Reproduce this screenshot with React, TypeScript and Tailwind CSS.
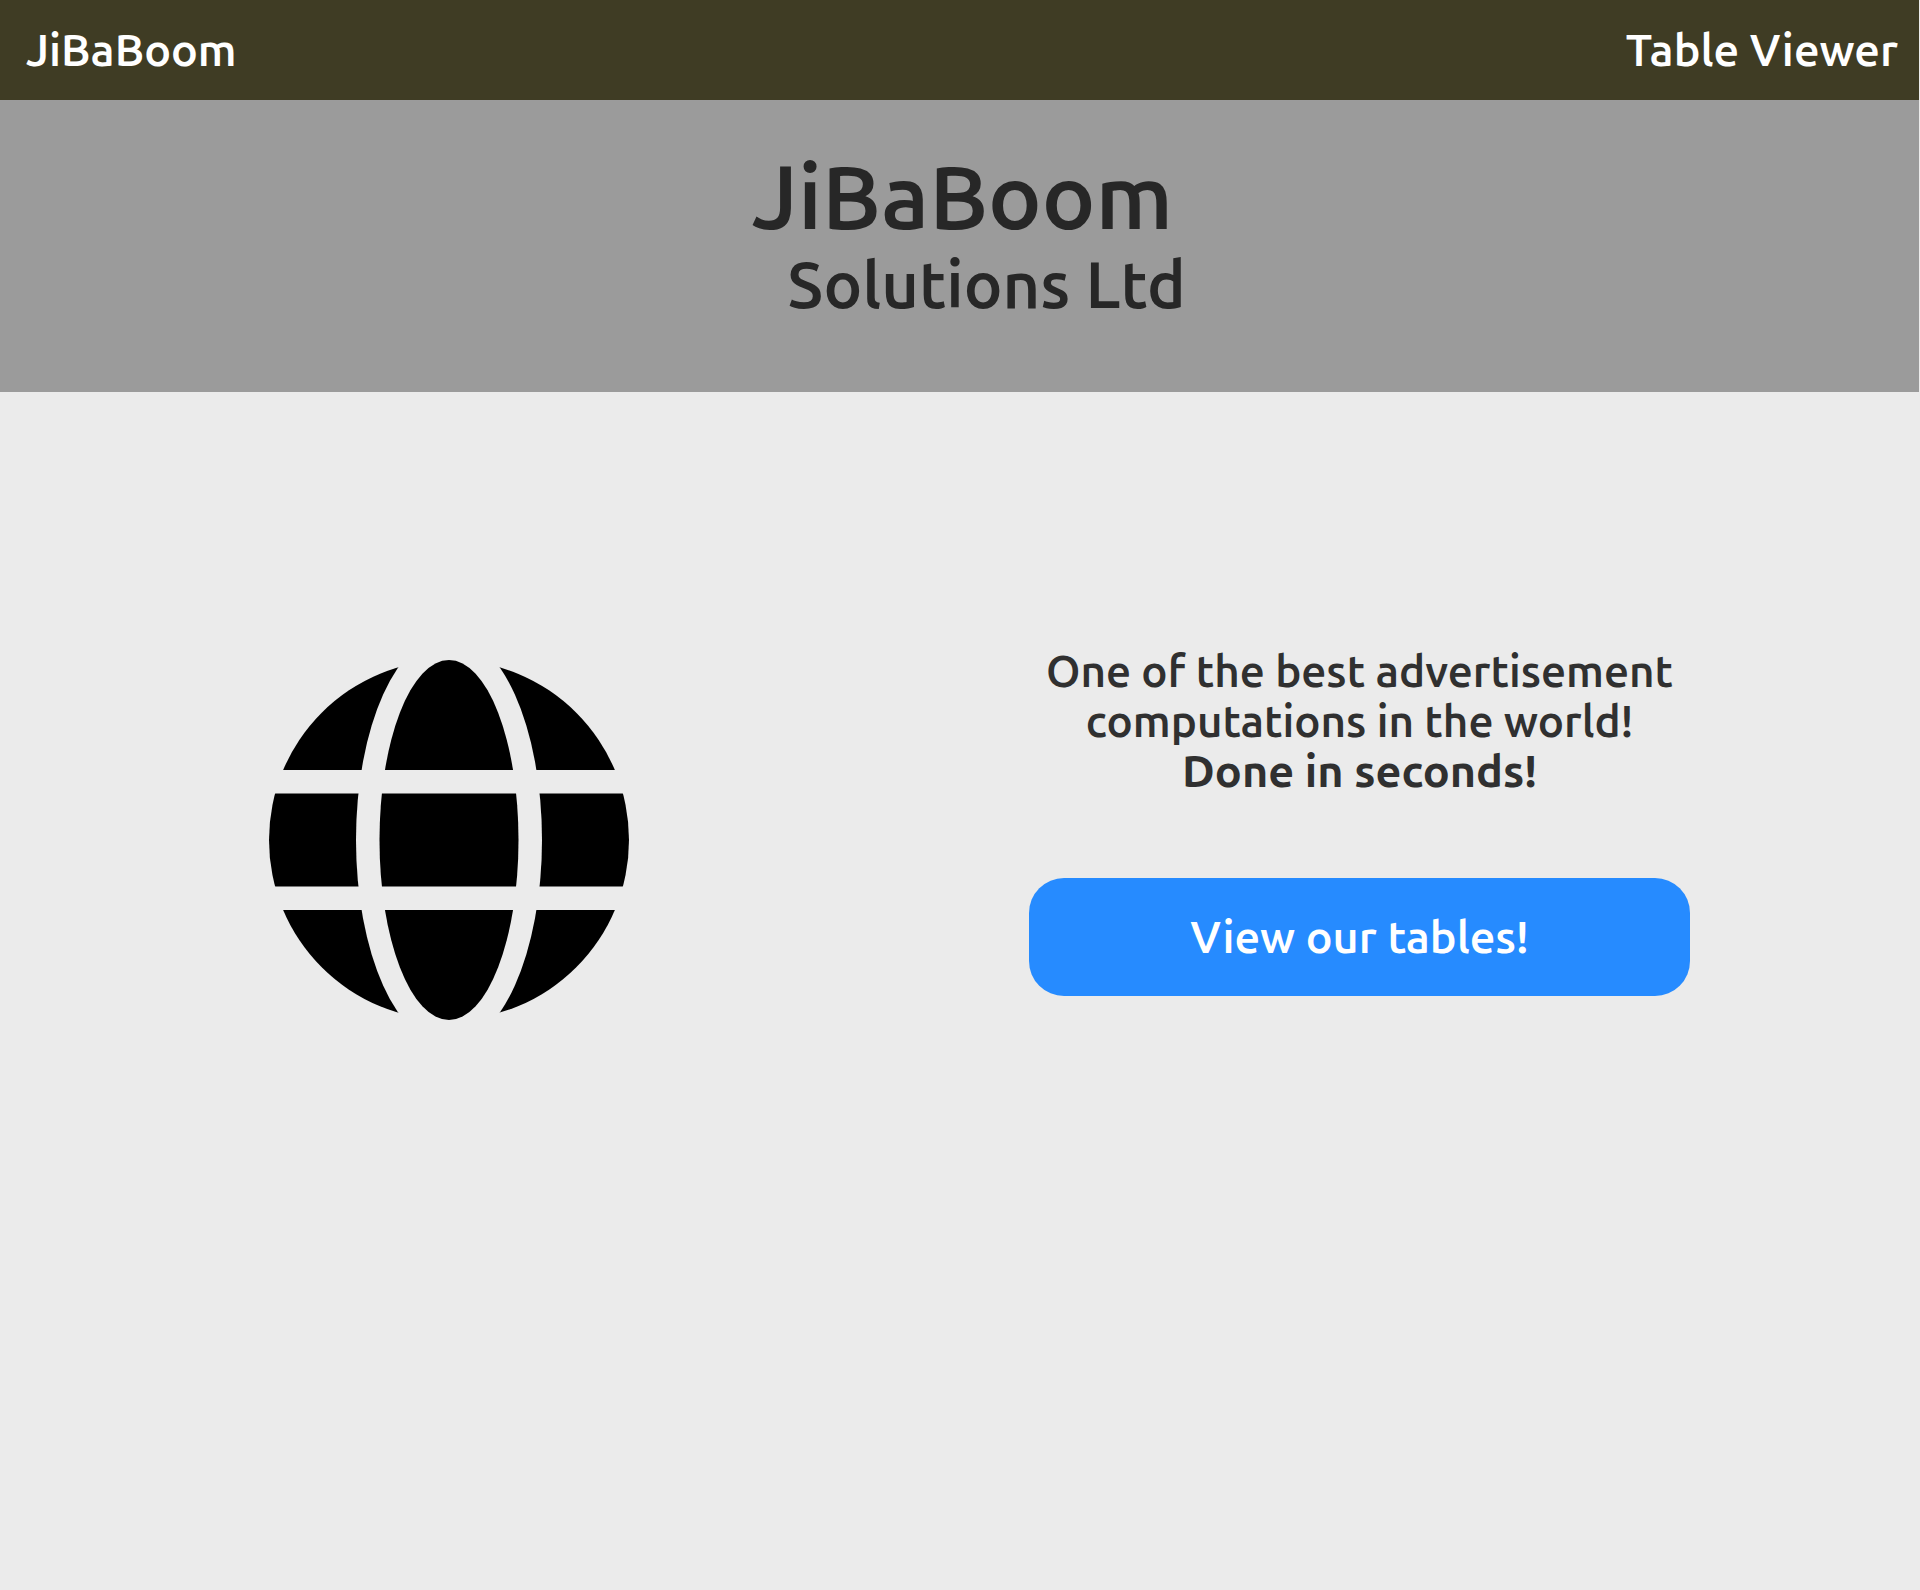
function Globe() {
  return (
    <svg viewBox="0 0 360 360" className="h-[360px] w-[360px]" role="img" aria-label="Globe">
      <defs>
        <mask id="latitudes">
          <rect width="360" height="360" fill="white" />
          <rect y="110" width="360" height="23.5" fill="black" />
          <rect y="226.5" width="360" height="23.5" fill="black" />
        </mask>
        <mask id="meridians">
          <rect width="360" height="360" fill="white" />
          <ellipse cx="180" cy="180" rx="93" ry="206" fill="black" />
        </mask>
      </defs>
      <g mask="url(#latitudes)">
        <circle cx="180" cy="180" r="180" mask="url(#meridians)" />
        <ellipse cx="180" cy="180" rx="69.5" ry="180" />
      </g>
    </svg>
  );
}

export default function App() {
  return (
    <div className="min-h-screen bg-[#ebebeb] font-['Ubuntu_Sans','Ubuntu','Noto_Sans',sans-serif] font-semibold">
      <header className="mr-px flex h-[100px] items-center justify-between bg-[#3f3c24] pt-1 pr-[21px] pl-[26px] text-[45px] text-white">
        <a href="#home">JiBaBoom</a>
        <a href="#tables">Table Viewer</a>
      </header>

      <section className="mr-px bg-[#9b9b9b] pt-[50px] pb-[70px] pl-1.5 text-center text-[#272727]">
        <h1 className="text-[90px] leading-[96px]">JiBaBoom</h1>
        <h2 className="mt-1 pl-12 text-[65px] leading-[72px]">Solutions Ltd</h2>
      </section>

      <main className="grid grid-cols-[897fr_925fr] items-start pt-[255px] pr-[98px]">
        <div className="flex justify-center pt-[13px]">
          <Globe />
        </div>
        <div className="flex flex-col items-center">
          <p className="text-center text-[44px] leading-[50px] text-[#303030]">
            One of the best advertisement
            <br />
            computations in the world!
            <br />
            <strong className="text-[45px] font-bold">Done in seconds!</strong>
          </p>
          <button
            type="button"
            className="mt-[81px] h-[118px] w-full max-w-[661px] rounded-[35px] bg-[#268bff] pt-1 text-[45px] text-white"
          >
            View our tables!
          </button>
        </div>
      </main>
    </div>
  );
}
